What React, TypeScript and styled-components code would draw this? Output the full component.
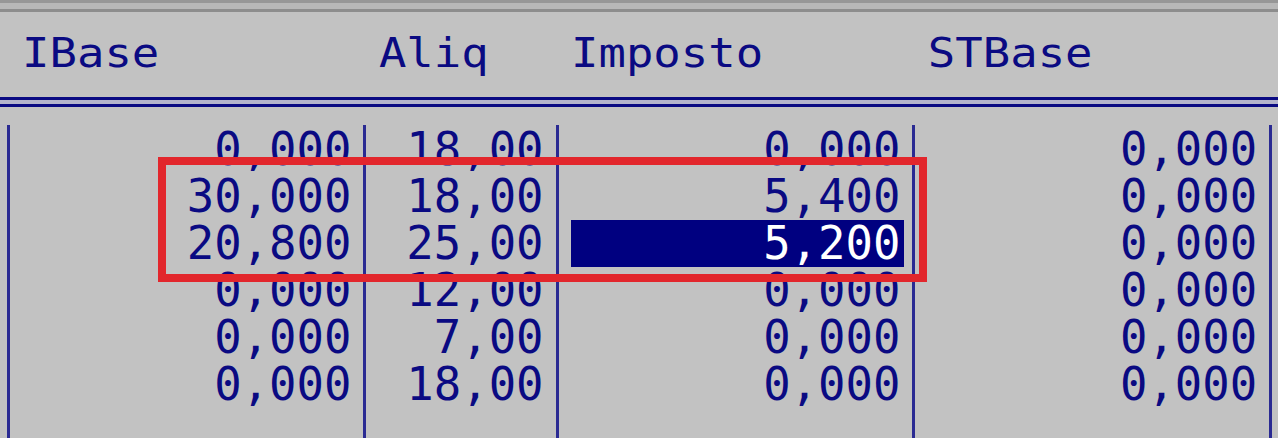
import styled, { createGlobalStyle } from 'styled-components';

const CELL = 27.45;
const NAVY = '#0a0a82';

const cols = [
    `${CELL - 5.4}px`,
    `${CELL * 12}px`,
    `${CELL}px`,
    `${CELL * 6}px`,
    `${CELL}px`,
    `${CELL * 12}px`,
    `${CELL}px`,
    `${CELL * 12}px`,
    `${CELL}px`,
].join(' ');

type Row = { base: string; aliq: string; imposto: string; st: string; selected?: boolean };

const rows: Row[] = [
    { base: '0,000', aliq: '18,00', imposto: '0,000', st: '0,000' },
    { base: '30,000', aliq: '18,00', imposto: '5,400', st: '0,000' },
    { base: '20,800', aliq: '25,00', imposto: '5,200', st: '0,000', selected: true },
    { base: '0,000', aliq: '12,00', imposto: '0,000', st: '0,000' },
    { base: '0,000', aliq: '7,00', imposto: '0,000', st: '0,000' },
    { base: '0,000', aliq: '18,00', imposto: '0,000', st: '0,000' },
];

function App() {
    return (
        <>
            <GlobalStyle />
            <Screen>
                <TopBar />
                <Header>
                    <span />
                    <Label>IBase</Label>
                    <span />
                    <Label>Aliq</Label>
                    <span />
                    <Label>Imposto</Label>
                    <span />
                    <Label>STBase</Label>
                    <span />
                </Header>
                <DoubleRule />
                <Body>
                    <Separator $first />
                    <Column>
                        {rows.map((r, i) => (
                            <Value key={i}>{r.base}</Value>
                        ))}
                    </Column>
                    <Separator />
                    <Column>
                        {rows.map((r, i) => (
                            <Value key={i}>{r.aliq}</Value>
                        ))}
                    </Column>
                    <Separator />
                    <Column>
                        {rows.map((r, i) => (
                            <Value key={i} $selected={r.selected}>
                                {r.imposto}
                            </Value>
                        ))}
                    </Column>
                    <Separator />
                    <Column>
                        {rows.map((r, i) => (
                            <Value key={i}>{r.st}</Value>
                        ))}
                    </Column>
                    <Separator />
                </Body>
                <Highlight />
            </Screen>
        </>
    );
}

export default App;

const GlobalStyle = createGlobalStyle`
    html, body {
        margin: 0;
        padding: 0;
        background: #c2c2c2;
        overflow: hidden;
    }
`;

const Screen = styled.div`
    position: relative;
    width: 1278px;
    height: 438px;
    overflow: hidden;
    background: #c2c2c2;
    font-family: 'DejaVu Sans Mono', monospace;
    font-size: 45.6px;
    color: ${NAVY};
`;

const TopBar = styled.div`
    height: 6px;
    border-top: 3px solid #979797;
    border-bottom: 3px solid #8d8d8d;
    background: #b8b8b8;
`;

const Header = styled.div`
    display: grid;
    grid-template-columns: ${cols};
    height: 47px;
    line-height: 47px;
    margin-top: 18px;
`;

const Label = styled.span`
    display: block;
    white-space: pre;
    transform: scaleY(0.9);
`;

const DoubleRule = styled.div`
    margin-top: 20px;
    height: 4px;
    border-top: 3px solid ${NAVY};
    border-bottom: 3px solid ${NAVY};
    background: #b4b4cc;
`;

const Body = styled.div`
    display: grid;
    grid-template-columns: ${cols};
    margin-top: 19px;
    height: 320px;
`;

const Column = styled.div`
    display: flex;
    flex-direction: column;
`;

const Value = styled.div<{ $selected?: boolean }>`
    height: 47px;
    line-height: 47px;
    text-align: right;
    white-space: pre;
    margin-right: ${(p) => (p.$selected ? '-4px' : '0')};
    padding-right: ${(p) => (p.$selected ? '4px' : '0')};
    background: ${(p) => (p.$selected ? '#000080' : 'transparent')};
    color: ${(p) => (p.$selected ? '#ffffff' : 'inherit')};
`;

const Separator = styled.div<{ $first?: boolean }>`
    position: relative;
    &::before {
        content: '';
        position: absolute;
        top: -1px;
        bottom: 0;
        left: ${(p) => (p.$first ? '7px' : '12px')};
        width: 3px;
        background: #2a2a92;
    }
`;

const Highlight = styled.div`
    position: absolute;
    left: 158px;
    top: 157px;
    width: 769px;
    height: 125px;
    box-sizing: border-box;
    border: 8px solid #e2262c;
    pointer-events: none;
`;
